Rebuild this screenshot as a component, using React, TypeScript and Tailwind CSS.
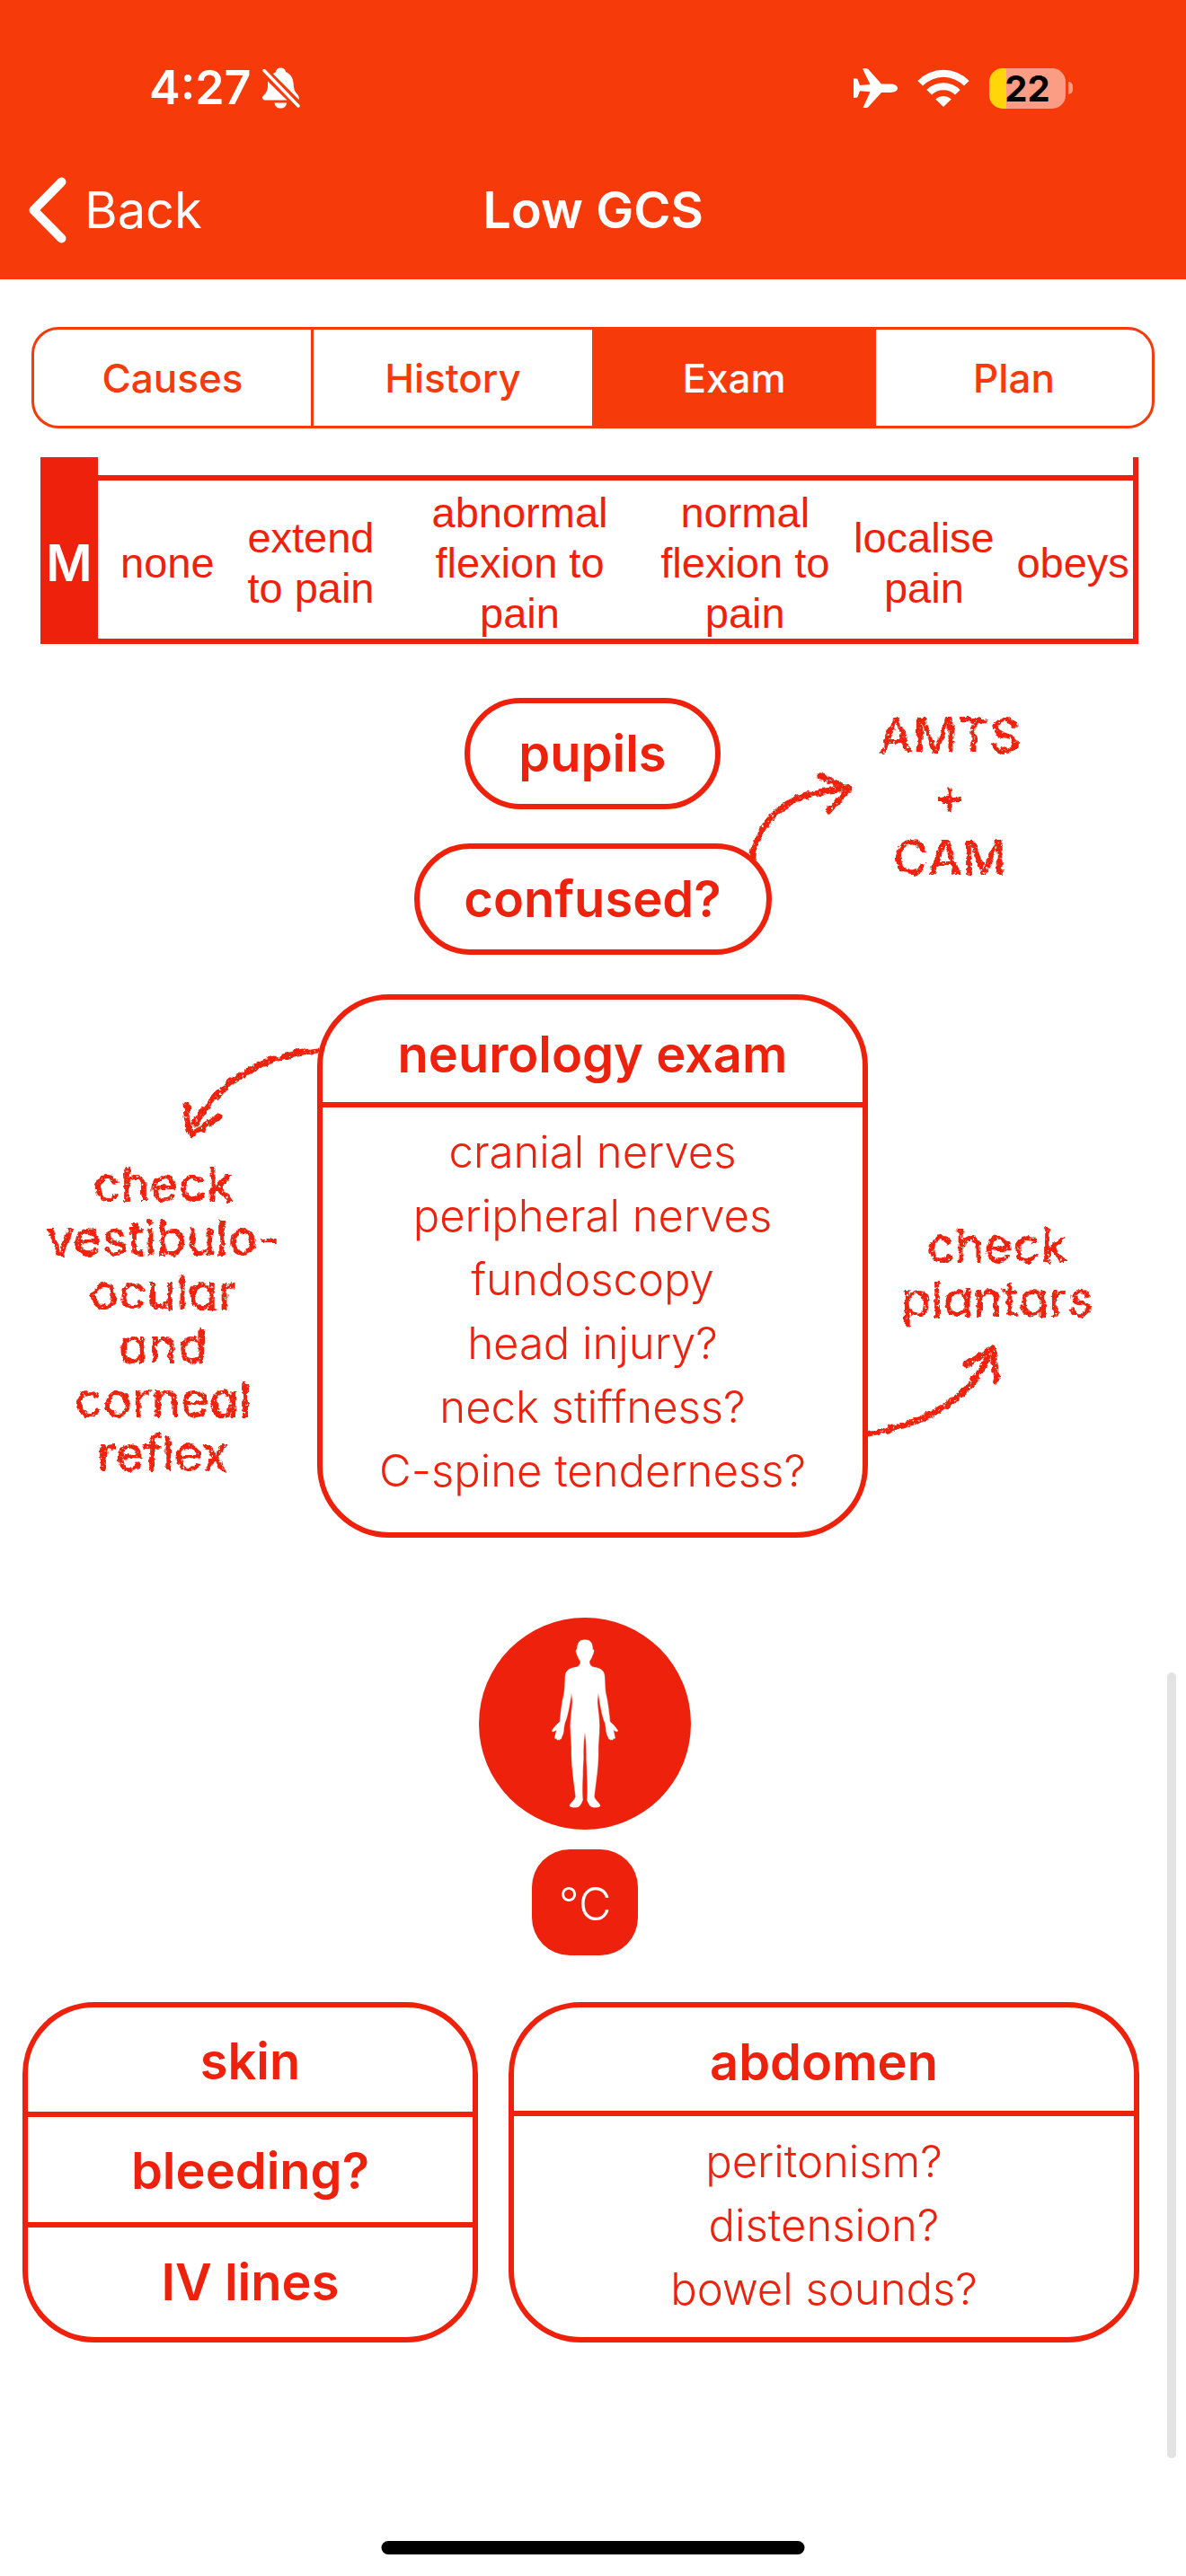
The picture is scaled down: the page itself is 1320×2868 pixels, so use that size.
import React from "react";

const TABS = [
  { label: "Causes", active: false },
  { label: "History", active: false },
  { label: "Exam", active: true },
  { label: "Plan", active: false },
];

const MOTOR = [
  ["none"],
  ["extend", "to pain"],
  ["abnormal", "flexion to", "pain"],
  ["normal", "flexion to", "pain"],
  ["localise", "pain"],
  ["obeys"],
];

const NEUROLOGY = [
  "cranial nerves",
  "peripheral nerves",
  "fundoscopy",
  "head injury?",
  "neck stiffness?",
  "C-spine tenderness?",
];

const HEADING = "font-[Inter,sans-serif] text-[56px] leading-[64px] font-semibold";
const LIST = "font-[Inter,sans-serif] text-[49px] leading-[71px] font-light";
const CHALK =
  "font-[Inter,sans-serif] text-center text-[54px] font-medium [font-feature-settings:'cv11'] [filter:url(#chalk)]";

function ChalkFilter() {
  return (
    <svg width="0" height="0" className="absolute" aria-hidden="true">
      <filter id="chalk" x="-5%" y="-5%" width="110%" height="110%">
        <feTurbulence type="fractalNoise" baseFrequency="0.12" numOctaves="3" seed="4" result="wobble" />
        <feDisplacementMap in="SourceGraphic" in2="wobble" scale="7" xChannelSelector="R" yChannelSelector="G" result="rough" />
        <feTurbulence type="fractalNoise" baseFrequency="0.35" numOctaves="2" seed="9" />
        <feColorMatrix values="0 0 0 0 0  0 0 0 0 0  0 0 0 0 0  0 0 0 -8 6.2" result="grain" />
        <feComposite in="rough" in2="grain" operator="in" />
      </filter>
    </svg>
  );
}

function BellOff() {
  return (
    <svg className="h-[46px] w-[42px]" viewBox="0 0 42 46" fill="currentColor" aria-label="Silent mode">
      <path d="M12 7.2C13 6 14 5.8 14.8 5.2C15.3 2 17.5.4 20.4.4C23.4.4 25.4 2 26 5C31.500 7.500 34 11.500 34.600 18C35 25 36.500 27.500 39 30C40.500 31.500 41.200 33.500 40.600 36Z" />
      <path d="M6 15.500L27.500 36.500H3C.8 36.500 0 35 0 33.500C.2 31 5.500 29.500 6 22Z" />
      <path d="M13.500 39.500H27C26.500 43.500 24 45.600 20.300 45.600S14 43.500 13.500 39.500Z" />
      <path d="M2 3.500L40 43" stroke="currentColor" strokeWidth="3.400" strokeLinecap="round" />
    </svg>
  );
}

function Airplane() {
  return (
    <svg className="h-[44px] w-[49px]" viewBox="0 0 49 44" fill="currentColor" aria-label="Airplane mode">
      <path d="M49 22.200C49 25 45.500 26.900 41 26.900H31L16.500 43Q15.600 44 14.300 44H10.500L18.500 26.300L7 25.200L4.600 31.800Q4.200 32.800 3.200 32.800H0V11.500H3.200Q4.200 11.500 4.600 12.500L7 19.100L18.500 18.100L10.500 1.500V.3H14.300Q15.600.3 16.500 1.300L31 17.500H41C45.500 17.500 49 19.400 49 22.200Z" />
    </svg>
  );
}

function Wifi() {
  return (
    <svg className="h-[42px] w-[58px]" viewBox="0 0 58 42" fill="currentColor" aria-label="Wi-Fi">
      <path d="M.3 13A40 40 0 0 1 57.700 13L52 18.600A32 32 0 0 0 6 18.600Z" />
      <path d="M10.300 23A26.500 26.500 0 0 1 47.700 23L42 28.500A19 19 0 0 0 16 28.500Z" />
      <path d="M20.300 33.600A12.500 12.500 0 0 1 37.700 33.600L29 42Z" />
    </svg>
  );
}

function Battery() {
  return (
    <div className="flex items-center gap-[3px]" aria-label="Battery 22 percent">
      <div className="flex h-[45px] w-[85px] items-center justify-center rounded-[15px] bg-linear-to-r from-[#ffd60a] from-[19px] to-[#fb9d85] to-[19px] font-[Inter,sans-serif] text-[40px] leading-[45px] font-bold text-black">
        22
      </div>
      <div className="h-[14px] w-[5px] rounded-r-full bg-[#fb9d85]" />
    </div>
  );
}

function Arrow({ className, box, shaft, head }: { className: string; box: string; shaft: string; head: string }) {
  return (
    <svg
      className={"absolute overflow-visible [filter:url(#chalk)] " + className}
      viewBox={box}
      fill="none"
      stroke="currentColor"
      strokeLinecap="round"
      aria-hidden="true"
    >
      <path d={shaft} strokeWidth="7" />
      <path d={head} strokeWidth="7" />
    </svg>
  );
}

const HALF_BODY =
  "M452 138C470 138 478 147 478 171C483 170 483 175 480 184C478 188 477 192 475 196C473 203 467 207 467 213C468 222 474 228 484 230C506 233 517 242 518 262C519 285 519 300 522 318C529 345 532 375 536 412C546 420 554 429 562 441C561 446 557 446 547 439C549 450 552 460 553 466C552 469 549 469 548 467C546 473 543 474 541 471C538 474 536 473 535 469C531 471 530 467 530 464C526 458 522 445 522 432L519 416C509 395 501 345 497 316C494 335 493 345 495 362C499 395 502 415 500 445C499 470 496 490 497 520C496 570 489 610 483 662C487 676 503 684 503 693C498 698 485 699 474 696C464 690 463 680 459 673C461 655 461 625 459 590C459 560 456 540 457 520C457 495 455 465 452 447Z";

function BodyBadge() {
  return (
    <div className="flex size-[236px] items-center justify-center rounded-full bg-[#ee220c] text-white">
      <svg className="h-[188px] w-[76px]" viewBox="338 136 228 564" fill="currentColor" aria-label="Whole body">
        <path d={HALF_BODY} stroke="currentColor" strokeWidth="1" />
        <path d={HALF_BODY} stroke="currentColor" strokeWidth="1" transform="translate(904 0) scale(-1 1)" />
      </svg>
    </div>
  );
}

export default function App() {
  return (
    <div className="relative flex min-h-screen flex-col bg-white text-[#ee220c]">
      <ChalkFilter />

      <header className="bg-[#f63a0a] font-[Inter,sans-serif] text-white">
        <div className="flex h-[156px] items-center justify-between pt-10 pr-[126px] pl-[166px]">
          <div className="flex items-center gap-3">
            <span className="text-[52px] leading-[64px] font-semibold">4:27</span>
            <BellOff />
          </div>
          <div className="flex items-center gap-[22px]">
            <Airplane />
            <Wifi />
            <Battery />
          </div>
        </div>
        <div className="grid h-[155px] grid-cols-[1fr_auto_1fr] items-center px-[31px]">
          <button type="button" className="flex items-center gap-5 justify-self-start text-[56px] leading-[64px]">
            <svg className="h-[74px] w-[43px]" viewBox="0 0 43 74" fill="none" stroke="currentColor" strokeWidth="10" strokeLinecap="round" strokeLinejoin="round" aria-hidden="true">
              <path d="M37.500 5.500L6.500 37L37.500 68.500" />
            </svg>
            Back
          </button>
          <h1 className="text-[56px] leading-[64px] font-semibold">Low GCS</h1>
        </div>
      </header>

      <div
        role="tablist"
        className="mx-[35px] mt-[53px] grid h-[113px] grid-cols-[308fr_313fr_316fr_307fr] overflow-hidden rounded-[30px] border-[3px] border-[#f63a0a] font-[Inter,sans-serif] text-[44px] font-medium text-[#f63a0a]"
      >
        {TABS.map((tab, i) => (
          <button
            key={tab.label}
            type="button"
            role="tab"
            aria-selected={tab.active}
            className={
              (i === 1 ? "border-l-[3px] border-[#f63a0a] " : "") + (tab.active ? "bg-[#f63a0a] text-white" : "")
            }
          >
            {tab.label}
          </button>
        ))}
      </div>

      <main className="mt-8">
        <div className="pr-[53px] pl-[45px]">
          <table className="w-full table-fixed border-separate border-spacing-0 border-r-[6px] border-[#ee220c] font-['Liberation_Sans',sans-serif] text-[47px] leading-[56px]">
            <colgroup>
              <col className="w-[5.25%]" />
              <col className="w-[12.75%]" />
              <col className="w-[13.5%]" />
              <col className="w-[24.75%]" />
              <col className="w-[16.5%]" />
              <col className="w-[16.25%]" />
              <col />
            </colgroup>
            <tbody>
              <tr>
                <td className="h-5 bg-[#ee220c]" />
                <td colSpan={6} />
              </tr>
              <tr className="text-center">
                <th scope="row" className="bg-[#ee220c] px-0 pt-2 pb-0 font-[Inter,sans-serif] text-[56px] font-semibold text-white">
                  M
                </th>
                {MOTOR.map((lines, i) => (
                  <td key={i} className="border-y-[6px] border-[#ee220c] px-0 pt-2 pb-0 align-middle whitespace-nowrap">
                    {lines.map((line) => (
                      <div key={line}>{line}</div>
                    ))}
                  </td>
                ))}
              </tr>
            </tbody>
          </table>
        </div>

        <section className="mt-[60px] grid grid-cols-[353fr_613fr_354fr]">
          <div className="col-start-2 flex flex-col items-center gap-[38px]">
            <div className={HEADING + " flex h-[124px] w-[285px] items-center justify-center rounded-full border-[6px]"}>
              pupils
            </div>
            <div className={HEADING + " relative flex h-[124px] w-[398px] items-center justify-center rounded-full border-[6px]"}>
              confused?
              <Arrow
                className="-top-[86px] -right-[96px] h-[100px] w-[118px]"
                box="0 0 118 100"
                shaft="M6 97C14 55 40 24 104 20"
                head="M83 5C93 12 103 14 114 19C110 28 98 34 91 43"
              />
            </div>
          </div>
          <div className={CHALK + " w-[182px] pt-2 leading-[68px]"}>
            <div>AMTS</div>
            <div>+</div>
            <div>CAM</div>
          </div>
        </section>

        <section className="mt-11 grid grid-cols-[353fr_613fr_354fr]">
          <div className="pt-[182px] pr-[22px]">
            <div className={CHALK + " ml-8 leading-[60px]"}>
              <div>check</div>
              <div>vestibulo-</div>
              <div>ocular</div>
              <div>and</div>
              <div>corneal</div>
              <div>reflex</div>
            </div>
          </div>
          <div className="relative rounded-[80px] border-[6px] text-center">
            <h2 className={HEADING + " border-b-[6px] pt-[29px] pb-[21px]"}>neurology exam</h2>
            <ul className={LIST + " pt-[14px] pb-[33px]"}>
              {NEUROLOGY.map((item) => (
                <li key={item}>{item}</li>
              ))}
            </ul>
            <Arrow
              className="top-[50px] -left-[158px] h-[110px] w-[156px]"
              box="0 0 156 110"
              shaft="M153 7C95 12 48 35 16 88"
              head="M6 66C7 82 8 90 12 100C22 92 32 90 41 81"
            />
            <Arrow
              className="-right-[158px] bottom-[101px] h-[110px] w-[156px]"
              box="0 0 156 110"
              shaft="M3 102C68 90 115 65 137 17"
              head="M113 25C122 17 133 14 142 7C146 18 145 30 147 41"
            />
          </div>
          <div className={CHALK + " pt-[250px] pr-[66px] leading-[60px]"}>
            <div>check</div>
            <div>plantars</div>
          </div>
        </section>

        <section className="mt-[89px] flex flex-col items-center gap-[22px] pr-[18px]">
          <BodyBadge />
          <div className="flex size-[118px] items-center justify-center rounded-[42px] bg-[#ee220c] pt-1 font-[Inter,sans-serif] text-[50px] leading-[71px] font-light text-white">
            °C
          </div>
        </section>

        <section className="mt-[52px] grid grid-cols-[507fr_702fr] gap-[34px] pr-[52px] pl-[25px] text-center">
          <div className={HEADING + " grid grid-rows-3 divide-y-[6px] divide-[#ee220c] rounded-[80px] border-[6px]"}>
            <div className="flex items-center justify-center pt-1">skin</div>
            <div className="flex items-center justify-center pt-1">bleeding?</div>
            <div className="flex items-center justify-center">IV lines</div>
          </div>
          <div className="rounded-[80px] border-[6px]">
            <h2 className={HEADING + " border-b-[6px] pt-[29px] pb-[22px]"}>abdomen</h2>
            <ul className={LIST + " pt-[15px] pb-[18px]"}>
              <li>peritonism?</li>
              <li>distension?</li>
              <li>bowel sounds?</li>
            </ul>
          </div>
        </section>
      </main>

      <div className="absolute right-[11px] bottom-[131px] h-[875px] w-[10px] rounded-full bg-[#e3e3e3]" />
      <div className="absolute bottom-6 left-1/2 h-[15px] w-[471px] -translate-x-1/2 rounded-full bg-black" />
    </div>
  );
}
